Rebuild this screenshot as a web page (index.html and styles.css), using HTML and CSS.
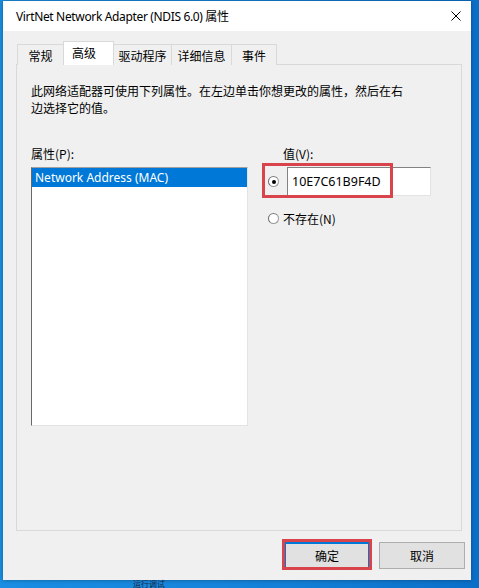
FILE: index.html
```html
<!DOCTYPE html>
<html lang="zh-CN">
<head>
<meta charset="utf-8">
<title>VirtNet Network Adapter (NDIS 6.0) 属性</title>
<link rel="stylesheet" href="styles.css">
</head>
<body>
<div class="desktop">
  <div class="window">
    <div class="titlebar">
      <span class="title">VirtNet Network Adapter (NDIS 6.0) 属性</span>
      <svg class="close" width="10" height="10" viewBox="0 0 10 10"><path d="M0.5 0.5 L9.5 9.5 M9.5 0.5 L0.5 9.5" stroke="#000" stroke-width="1" fill="none"/></svg>
    </div>
    <div class="content">
      <div class="tabs">
        <div class="tab w46">常规</div>
        <div class="tab tab-active">高级</div>
        <div class="tab w58">驱动程序</div>
        <div class="tab w60">详细信息</div>
        <div class="tab w46 tab-last">事件</div>
      </div>
      <div class="panel">
        <p class="desc">此网络适配器可使用下列属性。在左边单击你想更改的属性，然后在右<br>边选择它的值。</p>
        <div class="cols">
          <div class="col-left">
            <div class="label">属性(P):</div>
            <div class="listbox">
              <div class="item item-selected">Network Address (MAC)</div>
            </div>
          </div>
          <div class="col-right">
            <div class="label label-indent">值(V):</div>
            <div class="value-row">
              <span class="radio"><span class="dot"></span></span>
              <div class="textbox">10E7C61B9F4D</div>
              <span class="mark mark-value"></span>
            </div>
            <div class="radio-row">
              <span class="radio"></span>
              <span class="radio-label">不存在(N)</span>
            </div>
          </div>
        </div>
      </div>
      <div class="buttons">
        <div class="btn-wrap">
          <button class="btn btn-default">确定</button>
          <span class="mark mark-ok"></span>
        </div>
        <button class="btn">取消</button>
      </div>
    </div>
  </div>
  <div class="desk-text">运行调试</div>
</div>
</body>
</html>
```

FILE: styles.css
```css
* { box-sizing: border-box; }
html, body {
  margin: 0;
  padding: 0;
  width: 479px;
  height: 588px;
  overflow: hidden;
}
body {
  background: linear-gradient(90deg, #1a8ee2 0%, #1583d9 50%, #0b6fc8 100%);
  font-family: "Noto Sans", "Noto Sans CJK SC", sans-serif;
  font-size: 12px;
  color: #000;
}
.desktop {
  padding-top: 1px;
}
.window {
  margin-left: 3px;
  width: 468px;
  height: 579px;
  background: #f0f0f0;
  box-shadow: 0 0 4px rgba(0, 0, 0, 0.35);
}
.titlebar {
  height: 30px;
  background: #fff;
  display: flex;
  align-items: center;
  justify-content: space-between;
  padding: 0 10px 0 13px;
}
.title {
  font-size: 12px;
  letter-spacing: -0.35px;
  color: #000;
}
.close { display: block; }
.content {
  padding: 10px 0 0 13px;
}
.tabs {
  display: flex;
  align-items: flex-end;
  margin-left: 1px;
  height: 24px;
  position: relative;
  z-index: 1;
  margin-bottom: -1px;
}
.tab {
  height: 21px;
  line-height: 21px;
  border: 1px solid #d9d9d9;
  border-right: none;
  border-bottom: none;
  background: #f0f0f0;
  text-align: center;
  font-family: "Noto Sans CJK SC", sans-serif;
  white-space: nowrap;
}
.w46 { width: 46px; }
.w58 { width: 58px; }
.w60 { width: 60px; }
.tab-last { border-right: 1px solid #d9d9d9; }
.tab-active {
  width: 51px;
  height: 24px;
  line-height: 21px;
  background: #fff;
  border: 1px solid #d9d9d9;
  border-bottom: none;
  text-align: left;
  padding-left: 8px;
  margin-right: -1px;
}
.panel {
  width: 446px;
  height: 467px;
  border: 1px solid #d9d9d9;
  background: #f0f0f0;
  padding: 17px 0 0 14px;
}
.desc {
  margin: 0;
  line-height: 17px;
  font-family: "Noto Sans CJK SC", sans-serif;
  white-space: nowrap;
}
.cols {
  display: flex;
  margin-top: 29px;
}
.col-left {
  width: 217px;
}
.label {
  line-height: 17px;
  height: 17px;
  font-family: "Noto Sans CJK SC", sans-serif;
}
.label-indent { padding-left: 17px; }
.listbox {
  margin-top: 5px;
  height: 259px;
  background: #fff;
  border-top: 1px solid #a0a0a0;
  border-left: 1px solid #696969;
  border-right: 1px solid #e3e3e3;
  border-bottom: 1px solid #e3e3e3;
}
.item {
  height: 19px;
  line-height: 19px;
  padding-left: 3px;
  white-space: nowrap;
}
.item-selected {
  background: #0078d7;
  color: #fff;
}
.col-right {
  margin-left: 18px;
}
.value-row {
  position: relative;
  display: flex;
  align-items: center;
  margin-top: 5px;
}
.radio {
  position: relative;
  display: inline-block;
  width: 11px;
  height: 11px;
  margin-left: 2px;
  border-radius: 50%;
  border: 1px solid #9a9a9a;
  border-left-color: #6e6e6e;
  border-top-color: #7a7a7a;
  background: #fff;
  flex: none;
}
.dot {
  position: absolute;
  left: 3px;
  top: 3px;
  width: 4px;
  height: 4px;
  border-radius: 50%;
  background: #000;
}
.textbox {
  margin-left: 8px;
  width: 144px;
  height: 29px;
  line-height: 27px;
  background: #fff;
  border-top: 1px solid #828282;
  border-left: 1px solid #828282;
  border-right: 1px solid #e3e3e3;
  border-bottom: 1px solid #e3e3e3;
  padding-left: 4px;
  font-size: 12.5px;
}
.mark {
  position: absolute;
  border: 3px solid #d9434b;
  pointer-events: none;
}
.mark-value {
  left: -4px;
  top: -4px;
  width: 131px;
  height: 35px;
}
.radio-row {
  display: flex;
  align-items: center;
  margin-top: 14px;
  height: 17px;
}
.radio-label {
  margin-left: 4px;
  font-family: "Noto Sans CJK SC", sans-serif;
  line-height: 17px;
}
.buttons {
  display: flex;
  justify-content: flex-end;
  gap: 9px;
  margin-top: 11px;
  padding-right: 6px;
}
.btn-wrap {
  position: relative;
}
.btn {
  display: block;
  width: 86px;
  height: 27px;
  margin: 0;
  padding: 0;
  background: #e1e1e1;
  border: 1px solid #adadad;
  font-family: "Noto Sans CJK SC", sans-serif;
  font-size: 12px;
  color: #000;
}
.btn-default {
  border: 2px solid #0078d7;
}
.mark-ok {
  left: -2px;
  top: -3px;
  width: 90px;
  height: 31px;
}
.desk-text {
  margin-left: 133px;
  height: 8px;
  line-height: 8px;
  font-size: 8px;
  color: #1b2b44;
  font-family: "Noto Sans CJK SC", sans-serif;
}
```
